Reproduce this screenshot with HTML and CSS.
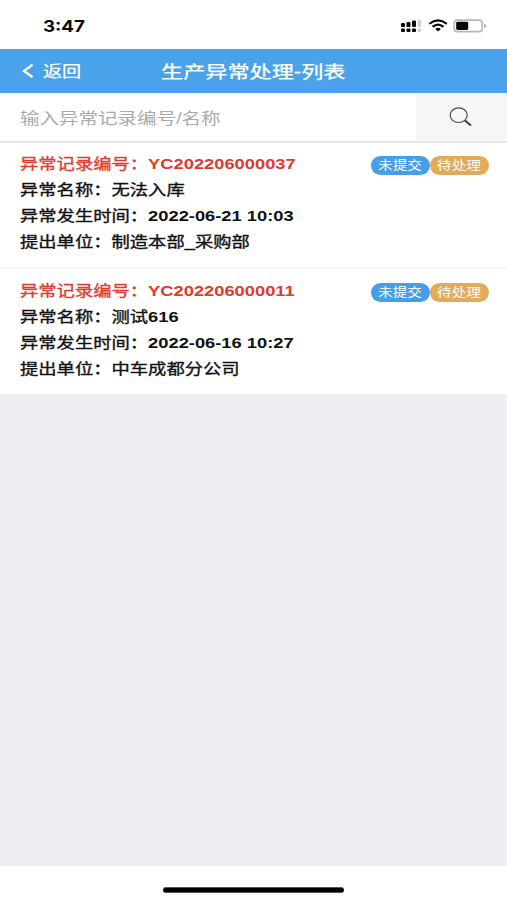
FILE: index.html
```html
<!DOCTYPE html>
<html lang="zh-CN">
<head>
<meta charset="utf-8">
<title>生产异常处理-列表</title>
<link rel="stylesheet" href="styles.css">
</head>
<body>
<div class="status">
  <span class="time">3:47</span>
  <svg class="status-icons" width="88" height="16" viewBox="0 0 88 16">
    <g fill="#080808">
      <rect x="1" y="5" width="4" height="4" rx="1"/><rect x="6.5" y="4" width="4" height="5" rx="1"/><rect x="12" y="2.5" width="4" height="6.5" rx="1"/>
      <rect x="1" y="10.5" width="4" height="3.6" rx="1"/><rect x="6.5" y="10.5" width="4" height="3.6" rx="1"/><rect x="12" y="10.5" width="4" height="3.6" rx="1"/>
    </g>
    <g fill="#d2d2d2"><rect x="17.7" y="1.5" width="3.4" height="7.5" rx="1"/><rect x="17.7" y="10.5" width="3.4" height="3.6" rx="1"/></g>
    <g fill="none" stroke="#080808" stroke-width="2.1">
      <path d="M29.4 5.8Q38-1 46.8 5.8"/><path d="M32.6 8.9Q38 4.2 43.5 8.9"/>
    </g>
    <path d="M35.2 10.9Q38 8.4 40.9 10.9L38 13.4z" fill="#080808"/>
    <rect x="54.2" y="2.1" width="28" height="11.6" rx="3.2" fill="#fff" stroke="#b9b9b9" stroke-width="1.7"/>
    <rect x="56.2" y="3.8" width="12" height="8.2" rx="1.4" fill="#000"/>
    <path d="M84 6Q86.4 6.5 86.4 7.9Q86.4 9.3 84 9.8z" fill="#b0b0b0"/>
  </svg>
</div>
<header class="bar">
  <svg class="chevron" width="12" height="16" viewBox="0 0 12 16"><path d="M10.5 1.8L2 8l8.5 6.2" fill="none" stroke="#fff" stroke-width="2.3"/></svg>
  <span class="back">返回</span>
  <h1 class="title">生产异常处理-列表</h1>
</header>
<div class="search">
  <div class="field"><span class="hint">输入异常记录编号/名称</span></div>
  <div class="go"><svg width="24" height="20" viewBox="0 0 24 20"><ellipse cx="9.7" cy="8.2" rx="8.5" ry="7.3" fill="none" stroke="#4a4a4a" stroke-width="1.2"/><path d="M15.6 13.2L22 18.5" stroke="#3c3c3c" stroke-width="2"/></svg></div>
</div>
<main>
  <article class="item">
    <div class="lines">
      <p class="red">异常记录编号：<b>YC202206000037</b></p>
      <p>异常名称：无法入库</p>
      <p>异常发生时间：<b>2022-06-21 10:03</b></p>
      <p>提出单位：制造本部_采购部</p>
    </div>
    <div class="tags"><span class="tag blue"><i>未提交</i></span><span class="tag gold"><i>待处理</i></span></div>
  </article>
  <article class="item last">
    <div class="lines">
      <p class="red">异常记录编号：<b>YC202206000011</b></p>
      <p>异常名称：测试<b>616</b></p>
      <p>异常发生时间：<b>2022-06-16 10:27</b></p>
      <p>提出单位：中车成都分公司</p>
    </div>
    <div class="tags"><span class="tag blue"><i>未提交</i></span><span class="tag gold"><i>待处理</i></span></div>
  </article>
</main>
<footer class="home"><div class="home-line"></div></footer>
</body>
</html>
```
FILE: styles.css
```css
* { box-sizing: border-box; }
body {
  margin: 0;
  height: 900px;
  display: flex;
  flex-direction: column;
  overflow: hidden;
  background: #eeeef3;
  font-family: "Liberation Sans", "Noto Sans CJK SC", sans-serif;
}
p, h1 { margin: 0; }
.status {
  height: 49px;
  flex: none;
  display: flex;
  justify-content: space-between;
  padding: 16px 19px 0 43px;
  background: #fff;
}
.time {
  font: bold 16px/20px Inter, "Liberation Sans", sans-serif;
  transform: scaleX(1.17);
  transform-origin: left;
  color: #080808;
}
.status-icons { margin-top: 2px; }
.bar {
  height: 44px;
  flex: none;
  display: flex;
  align-items: center;
  padding: 0 0 2px 22px;
  background: #4aa3ea;
  color: #fff;
}
.chevron { margin-top: 1px; }
.back {
  width: 118px;
  margin-left: 9px;
  font-size: 16px;
  -webkit-text-stroke: 0.2px;
}
.back, .title, .hint, .lines {
  white-space: nowrap;
  transform: scaleX(1.22);
  transform-origin: left;
}
.back { transform: scaleX(1.19); }
.title {
  font-size: 17.5px;
  font-weight: normal;
  transform: scaleX(1.265);
  -webkit-text-stroke: 0.25px;
}
.search {
  height: 50px;
  flex: none;
  display: flex;
  background: #fff;
  border-bottom: 2px solid #e6e6e6;
}
.field {
  flex: 1;
  display: flex;
  align-items: center;
  padding-left: 19.5px;
}
.hint { font-size: 16px; color: #aaa; }
.go {
  width: 91px;
  display: flex;
  align-items: center;
  justify-content: center;
  padding-right: 1px;
  background: #f6f6f6;
}
main { flex: 1; }
.item {
  height: 126px;
  display: flex;
  justify-content: space-between;
  padding: 8px 18px 0 19.5px;
  background: #fff;
  border-bottom: 2px solid #f5f5f6;
}
.last { height: 125px; border: 0; padding-top: 9px; }
.lines {
  font-size: 15px;
  line-height: 26.1px;
  color: #111;
}
.lines p { height: 26.1px; -webkit-text-stroke: 0.35px; }
.lines b { -webkit-text-stroke: 0; }
.lines .red { color: #df3b30; }
.tags { display: flex; padding-top: 5px; }
.tag {
  width: 59px;
  height: 19px;
  display: flex;
  align-items: center;
  justify-content: center;
  border-radius: 10px;
  color: #fff;
}
.tag i {
  font-style: normal;
  font-size: 12px;
  line-height: 19px;
  padding-top: 2px;
  white-space: nowrap;
  transform: scaleX(1.22);
}
.blue { background: #459fe8; }
.gold { background: #e2ab5a; }
.home {
  height: 34px;
  flex: none;
  display: flex;
  justify-content: center;
  padding-top: 20.5px;
  background: #fff;
}
.home-line {
  width: 181px;
  height: 6px;
  border-radius: 3px;
  background: #000;
  border: 1px solid #555;
  border-width: 1px 0;
}
```
